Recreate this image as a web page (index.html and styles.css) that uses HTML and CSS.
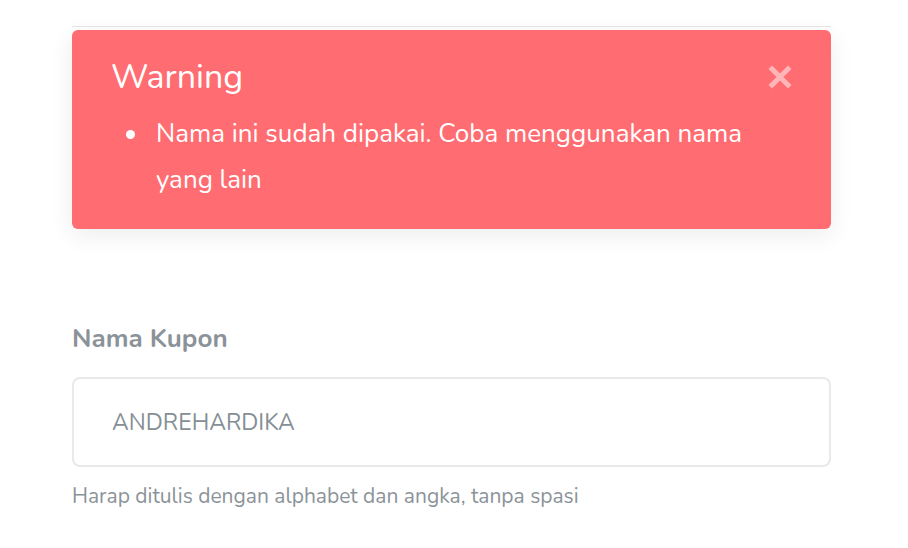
FILE: index.html
```html
<!DOCTYPE html>
<html lang="id">
<head>
    <meta charset="UTF-8">
    <title>Kupon</title>
    <link rel="stylesheet" href="styles.css">
</head>
<body>

<div class="container">
    <div class="alert">
        <div class="alert-head">
            <h2>Warning</h2>
            <button class="close" aria-label="Tutup">
                <svg width="24" height="24" viewBox="0 0 24 24"><path d="M4 4L20 20M20 4L4 20" stroke="currentColor" stroke-width="5" stroke-linecap="square"/></svg>
            </button>
        </div>
        <ul>
            <li>Nama ini sudah dipakai. Coba menggunakan nama yang lain</li>
        </ul>
    </div>

    <div class="field">
        <label for="kupon">Nama Kupon</label>
        <input type="text" id="kupon" value="ANDREHARDIKA">
        <p class="help">Harap ditulis dengan alphabet dan angka, tanpa spasi</p>
    </div>
</div>

</body>
</html>
```

FILE: styles.css
```css
body {
    margin: 0;
    background: #fff;
    font-family: "Nunito", Lato, "Open Sans", sans-serif;
}
.container {
    width: 759px;
    margin-left: 72px;
    padding-top: 26px;
}
.container::before {
    content: "";
    display: block;
    height: 1px;
    background: #e6e6e6;
    margin: 0 0 3px;
}
.alert {
    background: #ff6c71;
    color: #fff;
    border-radius: 6px;
    padding: 27px 39px 26px;
    box-shadow: 0 6px 24px rgba(0, 0, 0, 0.08);
}
.alert-head {
    display: flex;
    justify-content: space-between;
    align-items: center;
}
h2 {
    margin: 0;
    font-size: 34px;
    font-weight: 400;
    line-height: 40px;
}
.close {
    background: none;
    border: 0;
    padding: 0;
    color: rgba(255, 255, 255, 0.5);
    display: flex;
}
ul {
    margin: 14px 0 0;
    padding-left: 45px;
    font-size: 26px;
    line-height: 46px;
    max-width: 620px;
    list-style: none;
}
li {
    position: relative;
}
li::before {
    content: "";
    position: absolute;
    left: -30px;
    top: 19px;
    width: 9px;
    height: 9px;
    border-radius: 50%;
    background: #fff;
}
.field {
    margin-top: 92px;
}
label {
    display: block;
    color: #8b9399;
    font-size: 26px;
    font-weight: 700;
    line-height: 35px;
    margin-bottom: 21px;
}
input {
    box-sizing: border-box;
    width: 100%;
    height: 90px;
    border: 2px solid #e8e9ea;
    border-radius: 8px;
    padding: 0 38px;
    font-family: inherit;
    font-size: 23px;
    color: #858f96;
}
.help {
    margin: 15px 0 0;
    color: #8b9399;
    font-size: 21px;
    line-height: 29px;
}
```
